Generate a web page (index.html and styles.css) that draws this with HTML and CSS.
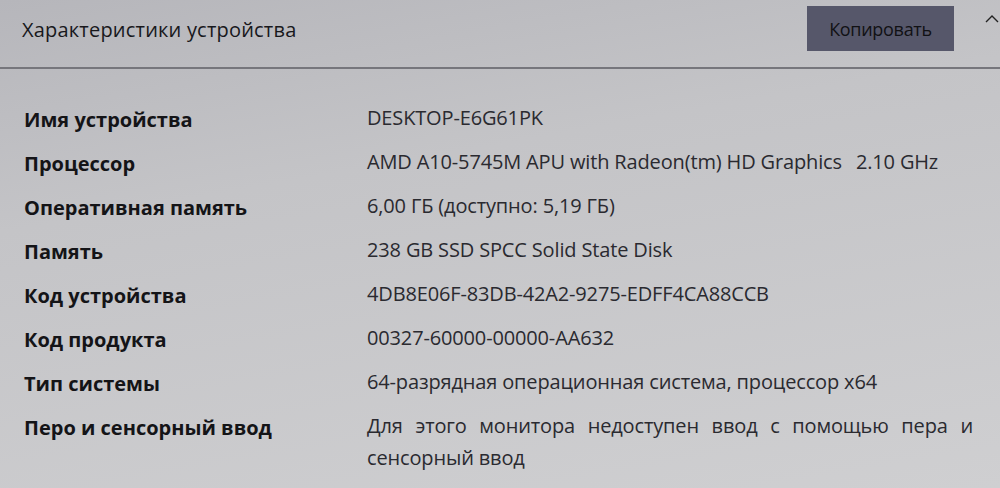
FILE: index.html
```html
<!DOCTYPE html>
<html lang="ru">
<head>
  <meta charset="UTF-8">
  <title>Характеристики устройства</title>
  <link rel="stylesheet" href="styles.css">
</head>
<body>
  <!-- Заголовок раздела -->
  <div class="header">
    <h2 class="title">Характеристики устройства</h2>
    <button class="copy-button">Копировать</button>
    <svg class="chevron" width="14" height="10" viewBox="0 0 14 10">
      <path d="M1 8 L7 2 L13 8" fill="none" stroke="#222" stroke-width="1.4"/>
    </svg>
  </div>

  <!-- Список характеристик -->
  <div class="specs">
    <div class="label">Имя устройства</div>
    <div class="value">DESKTOP-E6G61PK</div>

    <div class="label">Процессор</div>
    <div class="value">AMD A10-5745M APU with Radeon(tm) HD Graphics<span class="freq">2.10 GHz</span></div>

    <div class="label">Оперативная память</div>
    <div class="value">6,00 ГБ (доступно: 5,19 ГБ)</div>

    <div class="label">Память</div>
    <div class="value">238 GB SSD SPCC Solid State Disk</div>

    <div class="label">Код устройства</div>
    <div class="value">4DB8E06F-83DB-42A2-9275-EDFF4CA88CCB</div>

    <div class="label">Код продукта</div>
    <div class="value">00327-60000-00000-AA632</div>

    <div class="label">Тип системы</div>
    <div class="value">64-разрядная операционная система, процессор x64</div>

    <div class="label">Перо и сенсорный ввод</div>
    <div class="value justify">Для этого монитора недоступен ввод с помощью пера и сенсорный ввод</div>
  </div>
</body>
</html>
```

FILE: styles.css
```css
/* Фон страницы как у фото экрана */
body {
  margin: 0;
  font-family: "Open Sans", "Noto Sans", sans-serif;
  color: #1e1e22;
  background: linear-gradient(170deg, #b6b6bb 0%, #c4c4c7 35%, #cfcfd1 100%);
  height: 488px;
  overflow: hidden;
}

/* Шапка с кнопкой */
.header {
  display: flex;
  align-items: center;
  height: 67px;
  padding: 0 1px 0 22px;
  border-bottom: 2px solid #76767c;
}

.title {
  flex: 1;
  margin: 0;
  font-size: 20px;
  font-weight: 400;
  letter-spacing: 0.2px;
  color: #18181c;
  padding-bottom: 8px;
}

.copy-button {
  width: 147px;
  height: 45px;
  margin-bottom: 10px;
  border: none;
  background: #56576a;
  color: #111114;
  font-family: inherit;
  font-size: 18px;
  letter-spacing: -0.3px;
}

.chevron {
  margin: 0 0 30px 31px;
}

/* Таблица характеристик */
.specs {
  display: grid;
  grid-template-columns: 343px 606px;
  grid-auto-rows: minmax(44px, auto);
  padding: 37px 0 0 24px;
}

.label {
  font-size: 20px;
  font-weight: 700;
  color: #141417;
}

.value {
  font-size: 20px;
  letter-spacing: -0.15px;
  color: #2a2a30;
  margin-top: -4px;
  line-height: 32px;
}

.freq {
  margin-left: 14px;
}

.justify {
  text-align: justify;
  text-align-last: left;
}
```
